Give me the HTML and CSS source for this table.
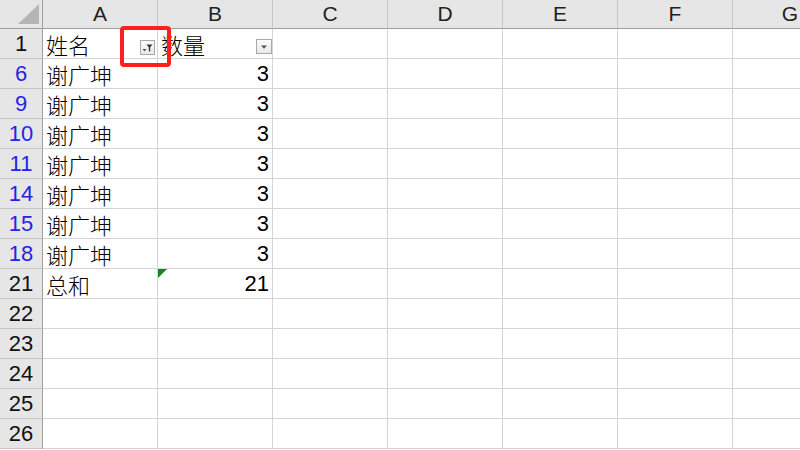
FILE: index.html
```html
<!DOCTYPE html>
<html lang="zh">
<head>
<meta charset="utf-8">
<title>Sheet</title>
<link rel="stylesheet" href="styles.css">
</head>
<body>
<div class="sheet">
  <div class="grid">
    <div class="hd corner"><span class="corner-tri"></span></div>
    <div class="hd col">A</div>
    <div class="hd col">B</div>
    <div class="hd col">C</div>
    <div class="hd col">D</div>
    <div class="hd col">E</div>
    <div class="hd col">F</div>
    <div class="hd col">G</div>

    <div class="rh">1</div>
    <div class="c txt">姓名<span class="fbtn">
      <svg width="13" height="13" viewBox="0 0 13 13"><path d="M1.5 8h4l-2 2.5z" fill="#555"/><path d="M5.5 3.5h6l-2.3 2.8v4.7l-1.4-1.2v-3.5z" fill="#333"/></svg>
    </span></div>
    <div class="c txt">数量<span class="fbtn fb2">
      <svg width="14" height="13" viewBox="0 0 14 13"><path d="M4 5.5h6l-3 3.2z" fill="#555"/></svg>
    </span></div>
    <div class="c"></div><div class="c"></div><div class="c"></div><div class="c"></div><div class="c"></div>

    <div class="rh blue">6</div><div class="c txt">谢广坤</div><div class="c num">3</div><div class="c"></div><div class="c"></div><div class="c"></div><div class="c"></div><div class="c"></div>
    <div class="rh blue">9</div><div class="c txt">谢广坤</div><div class="c num">3</div><div class="c"></div><div class="c"></div><div class="c"></div><div class="c"></div><div class="c"></div>
    <div class="rh blue">10</div><div class="c txt">谢广坤</div><div class="c num">3</div><div class="c"></div><div class="c"></div><div class="c"></div><div class="c"></div><div class="c"></div>
    <div class="rh blue">11</div><div class="c txt">谢广坤</div><div class="c num">3</div><div class="c"></div><div class="c"></div><div class="c"></div><div class="c"></div><div class="c"></div>
    <div class="rh blue">14</div><div class="c txt">谢广坤</div><div class="c num">3</div><div class="c"></div><div class="c"></div><div class="c"></div><div class="c"></div><div class="c"></div>
    <div class="rh blue">15</div><div class="c txt">谢广坤</div><div class="c num">3</div><div class="c"></div><div class="c"></div><div class="c"></div><div class="c"></div><div class="c"></div>
    <div class="rh blue">18</div><div class="c txt">谢广坤</div><div class="c num">3</div><div class="c"></div><div class="c"></div><div class="c"></div><div class="c"></div><div class="c"></div>
    <div class="rh">21</div><div class="c txt">总和</div><div class="c num"><span class="err"></span>21</div><div class="c"></div><div class="c"></div><div class="c"></div><div class="c"></div><div class="c"></div>
    <div class="rh">22</div><div class="c"></div><div class="c"></div><div class="c"></div><div class="c"></div><div class="c"></div><div class="c"></div><div class="c"></div>
    <div class="rh">23</div><div class="c"></div><div class="c"></div><div class="c"></div><div class="c"></div><div class="c"></div><div class="c"></div><div class="c"></div>
    <div class="rh">24</div><div class="c"></div><div class="c"></div><div class="c"></div><div class="c"></div><div class="c"></div><div class="c"></div><div class="c"></div>
    <div class="rh">25</div><div class="c"></div><div class="c"></div><div class="c"></div><div class="c"></div><div class="c"></div><div class="c"></div><div class="c"></div>
    <div class="rh">26</div><div class="c"></div><div class="c"></div><div class="c"></div><div class="c"></div><div class="c"></div><div class="c"></div><div class="c"></div>
  </div>
  <div class="mark"></div>
</div>
</body>
</html>
```

FILE: styles.css
```css
* { box-sizing: border-box; }
html, body {
  margin: 0;
  padding: 0;
  background: #fff;
  width: 800px;
  height: 450px;
  overflow: hidden;
}
.sheet {
  position: relative;
  width: 800px;
  height: 450px;
  overflow: hidden;
}
.grid {
  display: grid;
  grid-template-columns: 43px repeat(7, 115px);
  grid-template-rows: 29px repeat(14, 30px);
  width: 848px;
  font-family: "Liberation Sans", "Noto Sans CJK SC", sans-serif;
  font-size: 21px;
  color: #000;
}
.hd {
  background: #e6e6e6;
  border-right: 1px solid #c6c6c6;
  border-bottom: 1px solid #9e9e9e;
  display: flex;
  align-items: center;
  justify-content: center;
  font-size: 21px;
  color: #222;
}
.corner {
  position: relative;
  border-right: 1px solid #9e9e9e;
}
.corner-tri {
  position: absolute;
  left: 18px;
  top: 4px;
  width: 21px;
  height: 20px;
  background: #b5b5b5;
  clip-path: polygon(100% 0, 100% 100%, 0 100%);
}
.rh {
  background: #e6e6e6;
  border-right: 1px solid #9e9e9e;
  border-bottom: 1px solid #c6c6c6;
  display: flex;
  align-items: center;
  justify-content: center;
  font-size: 22px;
  color: #111;
}
.rh.blue { color: #2424e8; }
.c {
  position: relative;
  border-right: 1px solid #d4d4d4;
  border-bottom: 1px solid #d4d4d4;
  display: flex;
  align-items: center;
  white-space: nowrap;
}
.txt {
  font-family: "Noto Sans CJK SC", "Liberation Sans", sans-serif;
  font-size: 22px;
  font-weight: 300;
  padding-left: 3px;
  line-height: 1;
}
.num {
  justify-content: flex-end;
  padding-right: 3px;
  font-size: 22px;
}
.fbtn {
  position: absolute;
  right: 2px;
  top: 11px;
  width: 15px;
  height: 15px;
  border: 1px solid #a9a9a9;
  background: linear-gradient(#fbfbfb, #e9e9e9);
  display: flex;
  align-items: center;
  justify-content: center;
}
.fb2 {
  right: 0;
  top: 10px;
  width: 16px;
}
.err {
  position: absolute;
  left: 0;
  top: 0;
  width: 9px;
  height: 9px;
  background: #138a13;
  clip-path: polygon(0 0, 100% 0, 0 100%);
}
.mark {
  position: absolute;
  left: 120px;
  top: 26px;
  width: 51px;
  height: 41px;
  border: 4px solid #ff1f1f;
  border-radius: 4px;
}
```
